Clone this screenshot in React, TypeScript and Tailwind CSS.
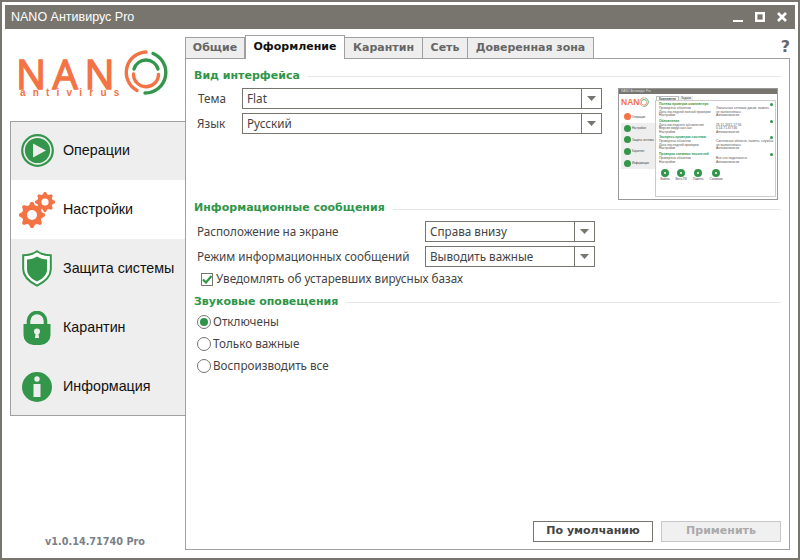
import type { ReactNode } from "react";
const G = "#34964a";
const O = "#f47344";
const dejavu = { fontFamily: '"DejaVu Sans",sans-serif' };
const lib = { fontFamily: '"Liberation Sans",sans-serif' };
const Arrow = () => <svg width="9" height="5" viewBox="0 0 9 5"><path d="M0 0h9L4.5 5z" fill="#77756e" /></svg>;
function Sel({ text, w }: { text: string; w: string }) {
  return <div className={`flex h-[21px] items-stretch border border-[#77756e] bg-white ${w}`}>
    <div className="flex-1 pl-[4px] text-[11.7px] leading-[19px] text-[#444]">{text}</div>
    <div className="flex w-[20px] items-center justify-center border-l border-[#77756e]"><Arrow /></div>
  </div>;
}
function Head({ t, line }: { t: string; line: string }) {
  return <div className="flex h-[15px] items-start gap-[8px]">
    <div className="text-[11px] leading-[15px] font-bold text-[#2f9548]" style={dejavu}>{t}</div>
    <div className={`h-px flex-1 bg-[#e6e6e6] ${line}`} />
  </div>;
}
function Radio({ on, t }: { on?: boolean; t: string }) {
  return <div className="flex h-[22px] items-center gap-[2px] pl-[3px]">
    <div className="flex h-[14px] w-[14px] items-center justify-center rounded-full border border-[#77756e] bg-white">{on && <div className="h-[8px] w-[8px] rounded-full bg-[#2f9548]" />}</div>
    <span className="text-[11.7px] text-[#444]">{t}</span>
  </div>;
}
function Gear({ cx, cy, r, ri, n }: { cx: number; cy: number; r: number; ri: number; n: number }) {
  const pts: string[] = [];
  for (let i = 0; i < n * 4; i++) {
    const a = ((i - 0.5) / (n * 4)) * Math.PI * 2;
    const rr = i % 4 < 2 ? r : r * 0.78;
    pts.push(`${cx + Math.cos(a) * rr},${cy + Math.sin(a) * rr}`);
  }
  return <g><polygon points={pts.join(" ")} fill={O} /><circle cx={cx} cy={cy} r={ri} fill="#fff" /></g>;
}
function Gears() {
  return <svg width="36" height="36" viewBox="0 0 36 36"><Gear cx={26} cy={10} r={10} ri={3.6} n={8} /><Gear cx={13} cy={23} r={13} ri={5} n={8} /></svg>;
}
function Ring({ size, className }: { size: number; className?: string }) {
  return <svg width={size} height={size} viewBox="0 0 46 46" fill="none" strokeLinecap="round" className={className}>
    <path d="M23 3A20.5 20.5 0 0 0 14 41.500" stroke={O} strokeWidth="3.400" />
    <path d="M30 4.500A20.500 20.500 0 0 1 22 44" stroke={G} strokeWidth="3.400" />
    <path d="M11 20A12.500 12.500 0 0 1 35 20" stroke={G} strokeWidth="3.400" />
    <path d="M35.500 25.500A12.500 12.500 0 0 1 10.500 25" stroke={O} strokeWidth="3.400" />
  </svg>;
}
function Menu({ icon, t, sel }: { icon: ReactNode; t: string; sel?: boolean }) {
  return <div className={`flex h-[59px] shrink-0 items-center ${sel ? "bg-white" : ""}`}>
    <div className="flex w-[52px] justify-center">{icon}</div>
    <span className="text-[14.3px] text-[#111]" style={lib}>{t}</span>
  </div>;
}
function MiniSec({ h, rows }: { h: string; rows: [string, string][] }) {
  return <div className="h-[16.7px]">
    <div className="flex h-[5px] items-center justify-between pr-[1px]">
      <span className="text-[3.3px] leading-[5px] font-bold text-[#34964a]">{h}</span>
      <span className="h-[3px] w-[3px] rounded-full bg-[#34964a]" />
    </div>
    {rows.map((r, i) => <div key={i} className="flex h-[3.5px] text-[3.3px] leading-[3.5px] text-[#555]"><span className="w-[57px]">{r[0]}</span><span>{r[1]}</span></div>)}
  </div>;
}
function MiniIcon({ t, c }: { t: string; c: string }) {
  return <div className="flex flex-col items-center gap-[1px]"><div className="h-[8px] w-[8px] rounded-full border-[3px]" style={{ borderColor: c }} /><span className="text-[3px] leading-[3px] text-[#444]">{t}</span></div>;
}
function Mini() {
  return <div className="flex h-[112px] w-[160px] flex-col border border-[#999] bg-white" style={lib}>
    <div className="flex h-[5px] items-center bg-[#77756e] pl-[2px] text-[3px] leading-[3px] text-[#ddd]">NANO Антивирус Pro</div>
    <div className="flex flex-1">
      <div className="flex w-[36px] flex-col pl-[2px] pt-[2px]">
        <div className="flex h-[11px] items-center text-[8.500px] leading-[10px] font-bold text-[#f47344]">NAN<Ring size={10} /></div>
        <div className="mt-[4px] flex h-[58px] flex-col bg-[#eee]">
          {["Операции", "Настройки", "Защита системы", "Карантин", "Информация"].map((t, i) => <div key={t} className={`flex h-[11.600px] items-center gap-[1px] pl-[3px] text-[2.800px] whitespace-nowrap text-[#444] ${i == 0 ? "bg-white" : ""}`}><div className="h-[7px] w-[7px] shrink-0 rounded-full" style={{ background: i == 0 ? O : G }} /><span>{t}</span></div>)}
        </div>
      </div>
      <div className="flex flex-1 flex-col pr-[1px] pt-[2px]">
        <div className="flex h-[4px] text-[3px] leading-[4px] text-[#444]"><span className="ml-[1px] border border-b-0 border-[#bbb] px-[2px] font-bold">Компьютер</span><span className="bg-[#eee] px-[2px]">Задачи</span></div>
        <div className="mb-[2px] flex-1 border border-[#ccc] pl-[3px] pr-[1px] pt-[1px]">
          <MiniSec h="Полная проверка компьютера" rows={[["Проверено объектов", "Локальные сетевые диски, память"], ["Дата последней полной проверки", "не выполнялась"], ["Настройки", "Автоматически"]]} />
          <MiniSec h="Обновление" rows={[["Дата последнего обновления", "26.11.2015 17:56"], ["Версия вирусных баз", "0.14.71.67746"], ["Настройки", "Автоматически"]]} />
          <MiniSec h="Экспресс-проверка системы" rows={[["Проверено объектов", "Системные области, память, службы"], ["Дата последней проверки", "не выполнялась"], ["Настройки", "Автоматически"]]} />
          <MiniSec h="Проверка съемных носителей" rows={[["Проверено объектов", "Все что подключено"], ["Настройки", "Автоматически"]]} />
          <div className="flex gap-[6px] pl-[1px]"><MiniIcon t="Файлы" c={G} /><MiniIcon t="Весь ПК" c={G} /><MiniIcon t="Память" c={G} /><MiniIcon t="Съемные" c={G} /></div>
        </div>
      </div>
    </div>
  </div>;
}
export default function App() {
  return <div className="h-[560px] w-[800px] bg-[#77756e] p-[2px]" style={{ fontFamily: '"Noto Sans",sans-serif' }}>
    <div className="flex h-full flex-col bg-white p-[3px]">
      <div className="flex h-[24px] items-center bg-[#77756e] pl-[6px] pr-[8px]">
        <span className="text-[12.5px] text-white" style={lib}>NANO Антивирус Pro</span>
        <div className="ml-auto flex items-center gap-[12px]">
          <svg width="10" height="10" viewBox="0 0 10 10"><path d="M0 9h10" stroke="#fff" strokeWidth="2" /></svg>
          <svg width="10" height="10" viewBox="0 0 10 10"><rect x="1.200" y="1.200" width="7.600" height="7.600" fill="none" stroke="#fff" strokeWidth="2.400" /></svg>
          <svg width="10" height="10" viewBox="0 0 10 10"><path d="M1 1l8 8M9 1l-8 8" stroke="#fff" strokeWidth="2.600" /></svg>
        </div>
      </div>
      <div className="flex flex-1">
        <div className="flex w-[180px] flex-col">
          <div className="flex h-[92px] items-start pl-[11px] pt-[20px]">
            <div className="flex w-[107px] flex-col pt-[11px]">
              <div className="h-[27px] whitespace-nowrap text-[40px] leading-[27px] tracking-[6.5px]" style={{ fontFamily: '"Open Sans",sans-serif', color: O, WebkitTextStroke: `1.400px ${O}` }}>NAN</div>
              <div className="pl-[4px] text-[10px] leading-[11px] font-bold tracking-[7.200px]" style={{ ...lib, color: O }}>antivirus</div>
            </div>
            <Ring size={46} />
          </div>
          <div className="ml-[5px] flex h-[295px] flex-col justify-center border border-r-0 border-[#a0a0a0] bg-[#eeeeee]">
            <Menu t="Операции" icon={<svg width="33" height="33" viewBox="0 0 33 33"><circle cx="16.500" cy="16.500" r="15.300" fill="none" stroke={G} strokeWidth="2.200" /><circle cx="16.500" cy="16.500" r="12.600" fill={G} /><path d="M12 9.500L25 16.500 12 23.500z" fill="#eee" /></svg>} />
            <Menu sel t="Настройки" icon={<Gears />} />
            <Menu t="Защита системы" icon={<svg width="30" height="37" viewBox="0 0 30 37"><path d="M15 1.200c4 3 9 4 13.800 4v14c0 8-7 13-13.800 16.500C8 32 1.200 27 1.200 19.200V5.200C6 5.200 11 4.200 15 1.200z" fill="#fff" stroke={G} strokeWidth="2" /><path d="M15 6.500c3 2 6.500 3 10 3v10c0 6-5 9.500-10 12-5-2.500-10-6-10-12v-10c3.500 0 7-1 10-3z" fill={G} /></svg>} />
            <Menu t="Карантин" icon={<svg width="28" height="34" viewBox="0 0 28 34"><path d="M5.500 14V10a8.500 8.500 0 0 1 17 0v4" fill="none" stroke={G} strokeWidth="3.600" /><path d="M0.500 13h27v11a10 10 0 0 1-10 10h-7a10 10 0 0 1-10-10z" fill={G} /><circle cx="14" cy="20.500" r="3" fill="#eee" /><path d="M12.800 22h2.400l.9 5h-4.200z" fill="#eee" /></svg>} />
            <Menu t="Информация" icon={<svg width="30" height="30" viewBox="0 0 30 30"><circle cx="15" cy="15" r="15" fill={G} /><circle cx="15" cy="7" r="2.700" fill="#eee" /><path d="M11.500 12h7v13h-7z" fill="#eee" /></svg>} />
          </div>
          <div className="mt-auto pb-[5px] text-center text-[9.700px] font-bold text-[#7a7f88]" style={dejavu}>v1.0.14.71740 Pro</div>
        </div>
        <div className="flex flex-1 flex-col pb-[5px] pr-[5px] pt-[7px]">
          <div className="relative z-10 flex h-[22px] items-end text-[11px] font-bold text-[#666]" style={dejavu}>
            <div className="flex h-[21px] w-[60px] items-center justify-center border border-b-0 border-[#a0a0a0] bg-[#eee]">Общие</div>
            <div className="-mb-px flex h-[24px] w-[100px] items-center justify-center border border-b-0 border-[#a0a0a0] bg-white text-[#111]">Оформление</div>
            <div className="flex h-[21px] w-[78px] items-center justify-center border border-b-0 border-l-0 border-[#a0a0a0] bg-[#eee]">Карантин</div>
            <div className="flex h-[21px] w-[45px] items-center justify-center border border-b-0 border-l-0 border-[#a0a0a0] bg-[#eee]">Сеть</div>
            <div className="flex h-[21px] w-[126px] items-center justify-center border border-b-0 border-l-0 border-[#a0a0a0] bg-[#eee]">Доверенная зона</div>
            <div className="mb-[2px] ml-auto text-[16px] leading-[18px] font-bold text-[#666]">?</div>
          </div>
          <div className="flex flex-1 flex-col border border-[#a0a0a0] px-[8px] pb-[7px] pt-[9px]">
            <Head t="Вид интерфейса" line="mt-[8px]" />
            <div className="mt-[5px] flex h-[112px] items-start">
              <div className="grid w-[408px] grid-cols-[48px_360px] items-center gap-y-[4px]">
                <span className="pl-[4px] text-[11.700px] text-[#444]">Тема</span><Sel text="Flat" w="w-[360px]" />
                <span className="pl-[3px] text-[11.700px] text-[#444]">Язык</span><Sel text="Русский" w="w-[360px]" />
              </div>
              <div className="ml-[16px]"><Mini /></div>
            </div>
            <Head t="Информационные сообщения" line="mt-[9px]" />
            <div className="mt-[6px] grid w-[401px] grid-cols-[231px_170px] items-center gap-y-[4px]">
              <span className="pl-[3px] text-[11.700px] text-[#444]">Расположение на экране</span><Sel text="Справа внизу" w="w-[170px]" />
              <span className="pl-[3px] text-[11.700px] text-[#444]">Режим информационных сообщений</span><Sel text="Выводить важные" w="w-[170px]" />
            </div>
            <div className="mt-[5px] flex h-[14px] items-center gap-[3px] pl-[7px]">
              <div className="flex h-[13px] w-[12px] items-center justify-center border border-[#77756e] bg-white"><svg width="10" height="9" viewBox="0 0 10 9"><path d="M1 4.500l3 3L9.500 1" fill="none" stroke="#2f9548" strokeWidth="2.200" /></svg></div>
              <span className="text-[11.700px] text-[#444]">Уведомлять об устаревших вирусных базах</span>
            </div>
            <div className="mt-[8px]"><Head t="Звуковые оповещения" line="mt-[8px]" /></div>
            <div className="mt-[2px]">
              <Radio on t="Отключены" /><Radio t="Только важные" /><Radio t="Воспроизводить все" />
            </div>
            <div className="mt-auto flex justify-end gap-[8px] text-[11px] font-bold" style={dejavu}>
              <div className="flex h-[21px] w-[120px] items-center justify-center border border-[#77756e] bg-white text-[#444]">По умолчанию</div>
              <div className="flex h-[21px] w-[120px] items-center justify-center border border-[#c8c8c8] bg-[#f0f0f0] text-[#aaa]">Применить</div>
            </div>
          </div>
        </div>
      </div>
    </div>
  </div>;
}
